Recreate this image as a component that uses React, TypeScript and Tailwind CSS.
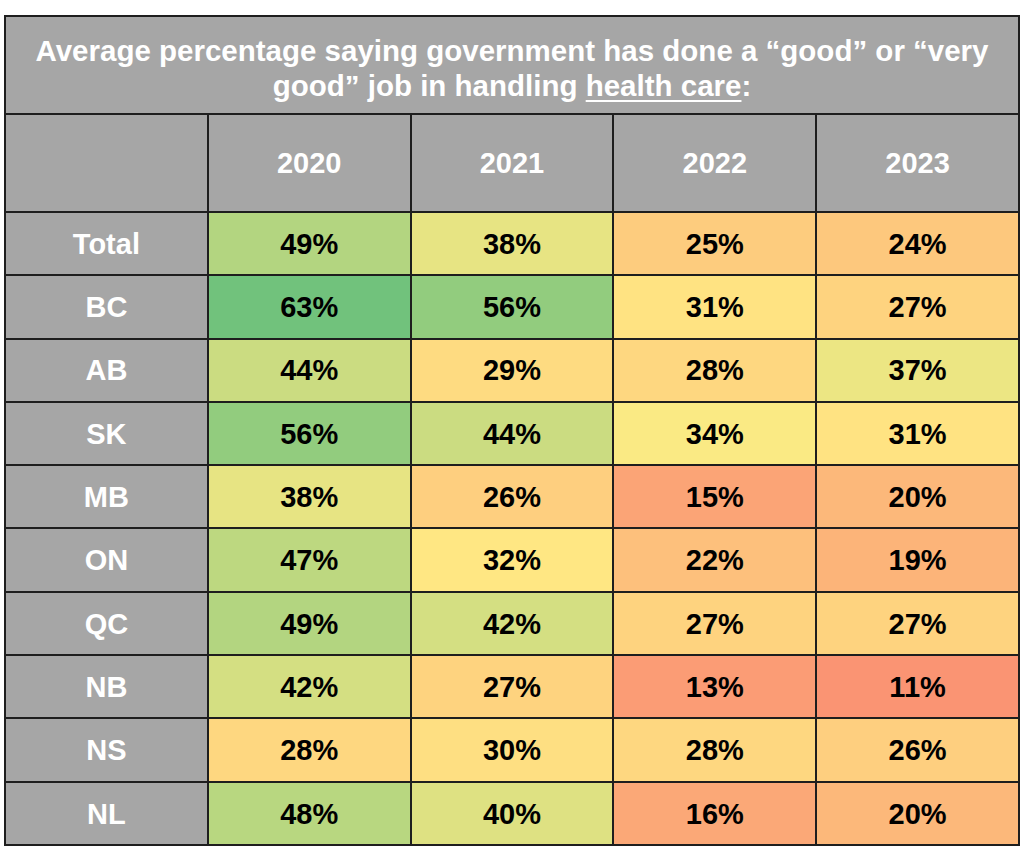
const years = ["2020", "2021", "2022", "2023"];

// values with pre-computed colour-scale fills (red → yellow → green)
const rows = [
  { label: "Total", cells: [["49%", "bg-[#b3d580]"], ["38%", "bg-[#e7e483]"], ["25%", "bg-[#fdcc7e]"], ["24%", "bg-[#fdc87d]"]] },
  { label: "BC", cells: [["63%", "bg-[#71c27c]"], ["56%", "bg-[#92cc7e]"], ["31%", "bg-[#ffe382]"], ["27%", "bg-[#fed37f]"]] },
  { label: "AB", cells: [["44%", "bg-[#cbdc81]"], ["29%", "bg-[#fedb81]"], ["28%", "bg-[#fed780]"], ["37%", "bg-[#ece683]"]] },
  { label: "SK", cells: [["56%", "bg-[#92cc7e]"], ["44%", "bg-[#cbdc81]"], ["34%", "bg-[#faea84]"], ["31%", "bg-[#ffe382]"]] },
  { label: "MB", cells: [["38%", "bg-[#e7e483]"], ["26%", "bg-[#fecf7f]"], ["15%", "bg-[#fba476]"], ["20%", "bg-[#fcb87a]"]] },
  { label: "ON", cells: [["47%", "bg-[#bdd880]"], ["32%", "bg-[#ffe783]"], ["22%", "bg-[#fdc07c]"], ["19%", "bg-[#fcb479]"]] },
  { label: "QC", cells: [["49%", "bg-[#b3d580]"], ["42%", "bg-[#d4df82]"], ["27%", "bg-[#fed37f]"], ["27%", "bg-[#fed37f]"]] },
  { label: "NB", cells: [["42%", "bg-[#d4df82]"], ["27%", "bg-[#fed37f]"], ["13%", "bg-[#fb9c75]"], ["11%", "bg-[#fa9473]"]] },
  { label: "NS", cells: [["28%", "bg-[#fed780]"], ["30%", "bg-[#fedf82]"], ["28%", "bg-[#fed780]"], ["26%", "bg-[#fecf7f]"]] },
  { label: "NL", cells: [["48%", "bg-[#b8d780]"], ["40%", "bg-[#dee182]"], ["16%", "bg-[#fba877]"], ["20%", "bg-[#fcb87a]"]] },
];

export default function App() {
  return (
    <div className="min-h-[849px] w-[1024px] bg-white pt-[15px] pl-[4px] font-['Liberation_Sans',Arial,sans-serif] font-bold">
      <div className="grid w-[1016px] grid-cols-5 gap-[2px] bg-[#1e1e1e] p-[2px]">
        <div className="col-span-5 flex h-[96px] items-center justify-center bg-[#a6a6a6] px-5 pt-[5px] text-center text-[29.5px] leading-[35px] text-white">
          <p>
            Average percentage saying government has done a “good” or “very good” job in handling{" "}
            <span className="underline decoration-[2px] underline-offset-[4px]">health care</span>:
          </p>
        </div>

        <div className="h-[96px] bg-[#a6a6a6]" />
        {years.map((y) => (
          <div key={y} className="flex h-[96px] items-center justify-center bg-[#a6a6a6] pt-[2px] text-[29px] text-white">
            {y}
          </div>
        ))}

        {rows.map((row) => (
          <div key={row.label} className="contents">
            <div className="flex h-[61.3px] items-center justify-center bg-[#a6a6a6] pt-[2px] text-[29px] text-white">
              {row.label}
            </div>
            {row.cells.map(([val, bg], i) => (
              <div key={i} className={`flex h-[61.3px] items-center justify-center pt-[2px] text-[29px] text-black ${bg}`}>
                {val}
              </div>
            ))}
          </div>
        ))}
      </div>
    </div>
  );
}
